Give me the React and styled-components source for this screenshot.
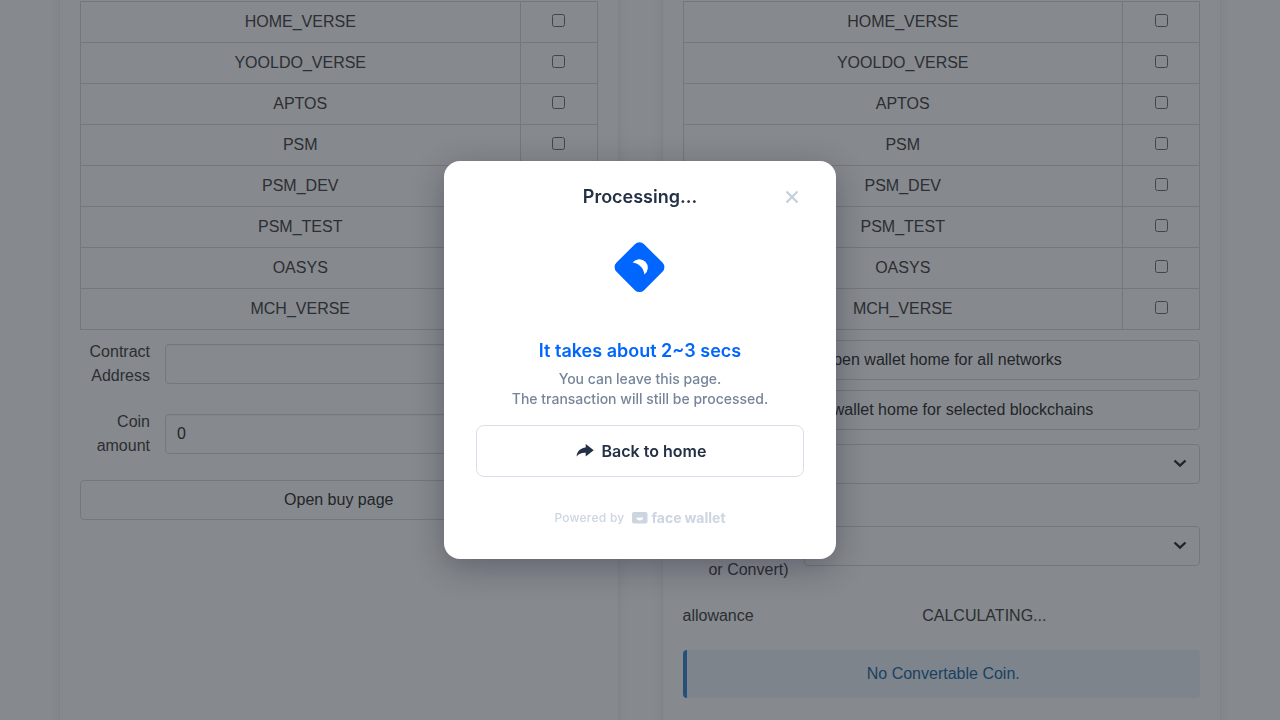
import React from "react";
import styled, { createGlobalStyle } from "styled-components";

const GlobalStyle = createGlobalStyle`
  *, *::before, *::after { box-sizing: border-box; }
  body {
    margin: 0;
    background: #fff;
    color: #4a4a4a;
    font: 400 16px/24px "Liberation Sans", Arial, sans-serif;
  }
  button, input, select { margin: 0; font: inherit; }
`;

const LockedScroller = styled.div`
  height: 100vh;
  overflow: hidden;
`;

const Page = styled.main`
  display: grid;
  grid-template-columns: 1fr 1fr;
  gap: 45px;
  margin-top: -40px;
  padding: 0 60px 40px;
`;

const Box = styled.section`
  padding: 41px 20px;
  border-radius: 6px;
  background: #fff;
  box-shadow: 0 8px 16px -2px rgba(10, 10, 10, 0.1), 0 0 0 1px rgba(10, 10, 10, 0.02);
`;

const NetworkTable = styled.table`
  width: 100%;
  margin-bottom: 10px;
  table-layout: fixed;
  border-collapse: collapse;
  text-align: center;
`;

const Cell = styled.td`
  width: ${(p) => p.$width};
  padding: 8px 12px;
  border: 1px solid #dbdbdb;
`;

const Checkbox = styled.input`
  vertical-align: baseline;
`;

const Field = styled.div`
  display: flex;
  align-items: center;
  gap: 15px;
  margin-bottom: 22px;
`;

const FieldLabel = styled.label`
  flex: none;
  width: ${(p) => p.$width};
  text-align: right;
`;

const controlFrame = `
  width: 100%;
  height: 40px;
  border: 1px solid #dbdbdb;
  border-radius: 4px;
  background: #fff;
  color: #363636;
`;

const TextInput = styled.input`
  ${controlFrame}
  flex: 1;
  min-width: 0;
  padding: 0 11px;
  box-shadow: inset 0 1px 2px rgba(10, 10, 10, 0.05);
`;

const SelectWrap = styled.div`
  position: relative;
  flex: 1;
  min-width: 0;
  height: 40px;
  svg {
    position: absolute;
    top: 12px;
    right: 13px;
    pointer-events: none;
  }
`;

const Select = styled.select`
  ${controlFrame}
  padding: 0 40px 0 11px;
  appearance: none;
`;

const Button = styled.button`
  ${controlFrame}
  display: block;
  margin-bottom: 10px;
  padding: 0 16px;
`;

const Value = styled.span`
  flex: 1;
  text-align: center;
`;

const Message = styled.p`
  margin: 0;
  padding: 12px 0;
  border-left: 4px solid #3e8ed0;
  border-radius: 4px;
  background: #eff5fb;
  color: #296fa8;
  text-align: center;
`;

const Overlay = styled.div`
  position: fixed;
  inset: 0;
  display: flex;
  align-items: center;
  justify-content: center;
  background: rgba(13, 20, 28, 0.5);
`;

const Dialog = styled.div`
  width: 392px;
  max-width: 100%;
  padding: 24px 32px 32px;
  border-radius: 16px;
  background: #fff;
  box-shadow: 0 8px 32px rgba(20, 20, 43, 0.32);
  color: #243045;
  font-family: Inter, sans-serif;
  text-align: center;
`;

const DialogHeader = styled.header`
  display: grid;
  grid-template-columns: 24px 1fr 24px;
  align-items: center;
`;

const Title = styled.h2`
  grid-column: 2;
  margin: 0;
  font-size: 18px;
  font-weight: 600;
  line-height: 24px;
`;

const CloseButton = styled.button`
  display: flex;
  align-items: center;
  justify-content: center;
  height: 24px;
  padding: 0;
  border: 0;
  background: none;
`;

const Spinner = styled.div`
  display: flex;
  justify-content: center;
  padding: 32px 0 46px;
`;

const Headline = styled.p`
  margin: 0 0 6px;
  color: #0066ff;
  font-size: 18px;
  font-weight: 600;
  line-height: 24px;
`;

const Description = styled.p`
  margin: 0 0 16px;
  color: #77859b;
  font-size: 14px;
  font-weight: 500;
  line-height: 20px;
`;

const HomeButton = styled.button`
  display: flex;
  align-items: center;
  justify-content: center;
  gap: 8px;
  width: 100%;
  height: 52px;
  border: 1px solid #d9dfe8;
  border-radius: 8px;
  background: #fff;
  color: #243045;
  font-size: 16px;
  font-weight: 600;
`;

const PoweredBy = styled.footer`
  display: flex;
  align-items: center;
  justify-content: center;
  gap: 8px;
  margin-top: 32px;
  color: #ccd5e0;
  font-size: 12px;
  font-weight: 500;
  line-height: 18px;
  letter-spacing: 0.02em;
`;

const Brand = styled.span`
  display: flex;
  align-items: center;
  gap: 3px;
  font: 700 14px/18px Inter, sans-serif;
  letter-spacing: 0;
`;

const NETWORKS = ["HOME_VERSE", "YOOLDO_VERSE", "APTOS", "PSM", "PSM_DEV", "PSM_TEST", "OASYS", "MCH_VERSE"];

function Networks({ group }) {
  return (
    <NetworkTable>
      <tbody>
        {NETWORKS.map((name) => (
          <tr key={name}>
            <Cell>
              <label htmlFor={`${group}-${name}`}>{name}</label>
            </Cell>
            <Cell $width="77px">
              <Checkbox type="checkbox" id={`${group}-${name}`} />
            </Cell>
          </tr>
        ))}
      </tbody>
    </NetworkTable>
  );
}

function Dropdown({ id }) {
  return (
    <SelectWrap>
      <Select id={id} />
      <svg width="14" height="14" viewBox="0 0 14 14" fill="none" stroke="#363636" strokeWidth="2.4">
        <path d="M1.5 4.5 7 9.7l5.500-5.200" />
      </svg>
    </SelectWrap>
  );
}

export default function App() {
  return (
    <>
      <GlobalStyle />
      <LockedScroller>
        <Page>
          <Box>
            <Networks group="buy" />
            <Field>
              <FieldLabel $width="70px" htmlFor="contract">Contract Address</FieldLabel>
              <TextInput id="contract" type="text" />
            </Field>
            <Field>
              <FieldLabel $width="70px" htmlFor="amount">Coin amount</FieldLabel>
              <TextInput id="amount" type="text" defaultValue="0" />
            </Field>
            <Button type="button">Open buy page</Button>
          </Box>
          <Box>
            <Networks group="home" />
            <Button type="button">Open wallet home for all networks</Button>
            <Button type="button">Open wallet home for selected blockchains</Button>
            <Field>
              <FieldLabel $width="106px" htmlFor="network">Select<br />Network</FieldLabel>
              <Dropdown id="network" />
            </Field>
            <Field>
              <FieldLabel $width="106px" htmlFor="coin">Coin<br />(Approve<br />or Convert)</FieldLabel>
              <Dropdown id="coin" />
            </Field>
            <Field>
              <span>allowance</span>
              <Value>CALCULATING...</Value>
            </Field>
            <Message>No Convertable Coin.</Message>
          </Box>
        </Page>
      </LockedScroller>
      <Overlay>
        <Dialog role="dialog" aria-modal="true" aria-labelledby="dialog-title">
          <DialogHeader>
            <Title id="dialog-title">Processing...</Title>
            <CloseButton type="button" aria-label="Close">
              <svg width="24" height="24" viewBox="0 0 24 24" fill="none" stroke="#c4cfdb" strokeWidth="2.2">
                <path d="M6.500 6.500l11 11M17.500 6.500l-11 11" />
              </svg>
            </CloseButton>
          </DialogHeader>
          <Spinner>
            <svg width="52" height="52" viewBox="0 0 52 52">
              <rect x="6" y="6.700" width="39" height="39" rx="6.500" fill="#0066ff" transform="rotate(45 25.500 26.200)" />
              <path d="M18.600 21.500A8.500 8.500 0 1 1 30.400 33.500C29.800 27.200 25 22.200 18.600 21.500Z" fill="#fff" />
            </svg>
          </Spinner>
          <Headline>It takes about 2~3 secs</Headline>
          <Description>
            You can leave this page.
            <br />
            The transaction will still be processed.
          </Description>
          <HomeButton type="button">
            <svg width="20" height="14" viewBox="-2 0 20 14" fill="currentColor">
              <path d="M9.700 0 17.700 6.200 9.700 12.400V8.800C5.800 8.500 2.900 9.700.6 12.400 1 7.400 4.300 4.100 9.700 3.600Z" />
            </svg>
            Back to home
          </HomeButton>
          <PoweredBy>
            Powered by
            <Brand>
              <svg width="16" height="12" viewBox="0 0 16 12">
                <rect width="15.500" height="11.500" rx="2" fill="#ccd5e0" />
                <path d="M4.400 5.200Q6.200 6 7.800 5.800T11.200 5.200Q10.800 8.500 7.800 8.500T4.400 5.200Z" fill="#fff" />
              </svg>
              <span>face</span>
              <span>wallet</span>
            </Brand>
          </PoweredBy>
        </Dialog>
      </Overlay>
    </>
  );
}
